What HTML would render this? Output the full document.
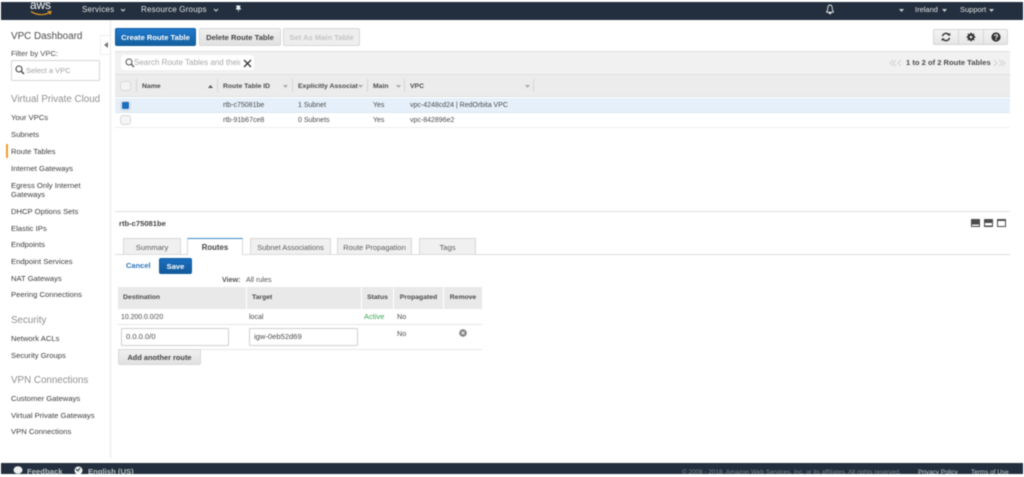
<!DOCTYPE html>
<html>
<head>
<meta charset="utf-8">
<style>
html,body{margin:0;padding:0;background:#fff;width:1024px;height:477px;overflow:hidden}
#p{position:relative;width:1024px;height:477px;overflow:hidden;font-family:"Liberation Sans",sans-serif;font-size:7.5px;color:#444;filter:blur(.45px)}
#p div,#p svg{position:absolute}
.t{white-space:nowrap;line-height:10px}
.nav{left:11px;font-size:7.65px;color:#3c3c3c;white-space:nowrap;line-height:10px}
.sec{left:11px;font-size:9.8px;color:#8f8f8f;white-space:nowrap;line-height:12px}
.b{font-weight:bold}
.hd{top:2px;left:1px;width:1022px;height:18px;background:#232f3e}
.w{color:#dfe4e4;font-size:7.5px;white-space:nowrap;line-height:10px}
.btn{height:18px;line-height:18px;text-align:center;font-size:7.6px;font-weight:bold;border-radius:2px;box-sizing:border-box;white-space:nowrap}
.g{background:linear-gradient(#f0f0f0,#e1e1e1);border:1px solid #d8d8d8;color:#444}
.ch{font-weight:bold;color:#4a4a4a;font-size:6.8px;white-space:nowrap;line-height:10px}
.v{width:1px;background:#d5d5d5}
.tab{top:238px;height:16px;box-sizing:border-box;background:#f0f0f0;border:1px solid #d8d8d8;border-bottom:0;text-align:center;font-size:7.6px;line-height:17px;color:#5c5c5c;white-space:nowrap}
.rh{top:287px;height:22px;background:#e9e9e9;box-sizing:border-box;font-weight:bold;font-size:6.8px;line-height:21px;color:#4a4a4a;white-space:nowrap}
.inp{height:18px;top:328px;background:#fff;border:1px solid #cfcfcf;box-sizing:border-box;font-size:7.6px;line-height:16px;color:#4c4c4c;padding-left:4px;border-radius:1px}
.cb{width:11px;height:10px;left:120px;box-sizing:border-box;border:1px solid #d8d8d8;border-radius:3px;background:#f5f5f5}
.c{font-size:7px;color:#4a4a4a}
</style>
</head>
<body>
<div id="p">
  <!-- header -->
  <div class="hd"></div>
  <div class="t" style="left:30px;top:-1px;color:#fff;font-size:12px;line-height:12px;letter-spacing:-.2px">aws</div>
  <svg style="left:29px;top:9px" width="25" height="8" viewBox="0 0 25 8"><path d="M2 2.500C8 6.500 15 6.500 21 3.500M18.500 2.500L22 2.500L21 5.500" fill="none" stroke="#f29c25" stroke-width="1.1"/></svg>
  <div class="w" style="left:82px;top:5px;font-size:8px;letter-spacing:.2px">Services</div>
  <svg style="left:120px;top:8px" width="6" height="4"><path d="M1 1L3 3L5 1" fill="none" stroke="#d5dbdb" stroke-width="1"/></svg>
  <div class="w" style="left:141px;top:5px;font-size:8px;letter-spacing:.2px">Resource Groups</div>
  <svg style="left:213px;top:8px" width="6" height="4"><path d="M1 1L3 3L5 1" fill="none" stroke="#d5dbdb" stroke-width="1"/></svg>
  <svg style="left:235px;top:5px" width="7" height="8" viewBox="0 0 7 8"><path d="M1 .5H5.500L5 2.800L6.500 4.500H4L3.500 7.800L3 4.500H.5L1.800 2.800Z" fill="#eef1f1"/></svg>
  <svg style="left:825px;top:4px" width="10" height="11" viewBox="0 0 10 11"><path d="M5 1C3 1 2.700 3 2.700 5C2.700 7 1.500 7.500 1.500 8.200H8.500C8.500 7.500 7.300 7 7.300 5C7.300 3 7 1 5 1ZM4 9H6L5 10Z" fill="none" stroke="#e6eaea" stroke-width=".9"/></svg>
  <svg style="left:899px;top:9px" width="5" height="3"><path d="M0 0H5L2.500 3Z" fill="#c9cfcf"/></svg>
  <div class="w" style="left:915px;top:5px">Ireland</div>
  <svg style="left:942px;top:9px" width="5" height="3"><path d="M0 0H5L2.500 3Z" fill="#c9cfcf"/></svg>
  <div class="w" style="left:960px;top:5px">Support</div>
  <svg style="left:989px;top:9px" width="5" height="3"><path d="M0 0H5L2.500 3Z" fill="#c9cfcf"/></svg>

  <!-- sidebar -->
  <div class="t" style="left:11px;top:31px;font-size:9.9px;line-height:12px;color:#4c4c4c">VPC Dashboard</div>
  <div class="nav" style="top:49px;color:#4c4c4c">Filter by VPC:</div>
  <div style="left:11px;top:60px;width:89px;height:21px;box-sizing:border-box;border:1px solid #d5d5d5;border-radius:2px"></div>
  <svg style="left:15px;top:65px" width="10" height="10" viewBox="0 0 10 10"><circle cx="4" cy="4" r="3" fill="none" stroke="#444" stroke-width="1.1"/><path d="M6 6L9 9" stroke="#444" stroke-width="1.4"/></svg>
  <div class="t" style="left:26px;top:66px;font-size:7.5px;color:#a0a0a0">Select a VPC</div>
  <div class="sec" style="top:94px">Virtual Private Cloud</div>
  <div class="nav" style="top:113px">Your VPCs</div>
  <div class="nav" style="top:130px">Subnets</div>
  <div style="left:6px;top:144px;width:2px;height:14px;background:#f29c25"></div>
  <div class="nav" style="top:147px">Route Tables</div>
  <div class="nav" style="top:164px">Internet Gateways</div>
  <div class="nav" style="top:181px">Egress Only Internet</div>
  <div class="nav" style="top:190px">Gateways</div>
  <div class="nav" style="top:207px">DHCP Options Sets</div>
  <div class="nav" style="top:224px">Elastic IPs</div>
  <div class="nav" style="top:240px">Endpoints</div>
  <div class="nav" style="top:257px">Endpoint Services</div>
  <div class="nav" style="top:274px">NAT Gateways</div>
  <div class="nav" style="top:290px">Peering Connections</div>
  <div class="sec" style="top:315px">Security</div>
  <div class="nav" style="top:334px">Network ACLs</div>
  <div class="nav" style="top:351px">Security Groups</div>
  <div class="sec" style="top:375px">VPN Connections</div>
  <div class="nav" style="top:394px">Customer Gateways</div>
  <div class="nav" style="top:411px">Virtual Private Gateways</div>
  <div class="nav" style="top:427px">VPN Connections</div>
  <div style="left:110px;top:20px;width:1px;height:438px;background:#e8e8e8"></div>
  <div style="left:100px;top:35px;width:10px;height:20px;background:#fff;border:1px solid #eee;border-right:0;box-sizing:border-box"></div>
  <svg style="left:104px;top:42px" width="4" height="6"><path d="M4 0V6L0 3Z" fill="#777"/></svg>

  <!-- buttons -->
  <div class="btn" style="left:115px;top:28px;width:81px;background:linear-gradient(#1f79cc,#15609f);color:#fff;border:1px solid #125d9c">Create Route Table</div>
  <div class="btn g" style="left:199px;top:28px;width:82px">Delete Route Table</div>
  <div class="btn g" style="left:283px;top:28px;width:77px;color:#c4c4c4;background:#eee">Set As Main Table</div>
  <div style="left:933px;top:29px;width:75px;height:16px;box-sizing:border-box;border:1px solid #d5d5d5;background:linear-gradient(#f3f3f3,#e6e6e6);border-radius:2px"></div>
  <div class="v" style="left:958px;top:30px;height:14px"></div>
  <div class="v" style="left:983px;top:30px;height:14px"></div>
  <svg style="left:941px;top:32px" width="10" height="10" viewBox="0 0 10 10"><path d="M1.500 4.200A3.600 3.600 0 0 1 8 3M8.500 5.800A3.600 3.600 0 0 1 2 7" fill="none" stroke="#333" stroke-width="1.4"/><path d="M6.500 3.600H9.300V.8ZM3.500 6.400H.7V9.200Z" fill="#333"/></svg>
  <svg style="left:966px;top:32px" width="10" height="10" viewBox="0 0 10 10"><circle cx="5" cy="5" r="2.600" fill="none" stroke="#333" stroke-width="1.8"/><path d="M5 .5V9.500M.5 5H9.500M1.800 1.800L8.200 8.200M8.200 1.800L1.800 8.200" stroke="#333" stroke-width="1.200"/><circle cx="5" cy="5" r="1.300" fill="#eee"/></svg>
  <svg style="left:991px;top:32px" width="10" height="10" viewBox="0 0 10 10"><circle cx="5" cy="5" r="4.600" fill="#333"/><path d="M3.500 4C3.500 2.300 6.500 2.300 6.500 4C6.500 5 5 5 5 6" fill="none" stroke="#eee" stroke-width="1.100"/><rect x="4.400" y="6.700" width="1.200" height="1.200" fill="#eee"/></svg>

  <!-- table -->
  <div style="left:115px;top:51px;width:895px;height:23px;background:#f1f1f1;border-top:1px solid #e0e0e0;box-sizing:border-box"></div>
  <div style="left:121px;top:55px;width:133px;height:15px;background:#fff;border-radius:3px"></div>
  <svg style="left:125px;top:58px" width="10" height="10" viewBox="0 0 10 10"><circle cx="4" cy="4" r="3" fill="none" stroke="#555" stroke-width="1"/><path d="M6 6L9 9" stroke="#555" stroke-width="1.300"/></svg>
  <div class="t" style="left:134px;top:58px;width:106px;overflow:hidden;font-size:8px;color:#a8a8a8">Search Route Tables and their</div>
  <svg style="left:243px;top:59px" width="9" height="9"><path d="M1 1L8 8M8 1L1 8" stroke="#333" stroke-width="1.300"/></svg>
  <div class="t b" style="left:906px;top:58px;font-size:7.6px;color:#4c4c4c">1 to 2 of 2 Route Tables</div>
  <svg style="left:889px;top:59px" width="14" height="8" viewBox="0 0 14 8"><path d="M4 1L1 4L4 7M7 1L4 4L7 7M12 1L9 4L12 7" fill="none" stroke="#d4d4d4" stroke-width="1"/></svg>
  <svg style="left:992px;top:59px" width="14" height="8" viewBox="0 0 14 8"><path d="M2 1L5 4L2 7M7 1L10 4L7 7M10 1L13 4L10 7" fill="none" stroke="#d4d4d4" stroke-width="1"/></svg>

  <div style="left:115px;top:74px;width:895px;height:23px;background:#ececec;border-top:1px solid #e0e0e0;border-bottom:1px solid #e0e0e0;box-sizing:border-box"></div>
  <div class="cb" style="top:81px;background:#f4f4f4"></div>
  <div class="v" style="left:136px;top:79px;height:13px"></div>
  <div class="ch" style="left:142px;top:82px">Name</div>
  <svg style="left:208px;top:85px" width="5" height="3"><path d="M0 3H5L2.500 0Z" fill="#555"/></svg>
  <div class="v" style="left:217px;top:79px;height:13px"></div>
  <div class="ch" style="left:223px;top:82px">Route Table ID</div>
  <svg style="left:283px;top:85px" width="5" height="3"><path d="M0 0H5L2.500 3Z" fill="#aaa"/></svg>
  <div class="v" style="left:292px;top:79px;height:13px"></div>
  <div class="ch" style="left:298px;top:82px;width:60px;overflow:hidden">Explicitly Associat</div>
  <svg style="left:358px;top:85px" width="5" height="3"><path d="M0 0H5L2.500 3Z" fill="#aaa"/></svg>
  <div class="v" style="left:367px;top:79px;height:13px"></div>
  <div class="ch" style="left:373px;top:82px">Main</div>
  <svg style="left:396px;top:85px" width="5" height="3"><path d="M0 0H5L2.500 3Z" fill="#aaa"/></svg>
  <div class="v" style="left:404px;top:79px;height:13px"></div>
  <div class="ch" style="left:410px;top:82px">VPC</div>
  <svg style="left:525px;top:85px" width="5" height="3"><path d="M0 0H5L2.500 3Z" fill="#aaa"/></svg>
  <div class="v" style="left:533px;top:79px;height:13px"></div>

  <div style="left:115px;top:98px;width:895px;height:15px;background:#e6f0fa;border-bottom:1px solid #dbe6f0;box-sizing:border-box"></div>
  <div style="left:115px;top:113px;width:895px;height:15px;background:#fff;border-bottom:1px solid #eee;box-sizing:border-box"></div>
  <div class="cb" style="top:101px;background:#e9eef3"></div>
  <div style="left:122px;top:102px;width:7px;height:7px;background:#1a6fc0;border-radius:1px"></div>
  <div class="cb" style="top:115px"></div>
  <div class="t c" style="left:223px;top:101px">rtb-c75081be</div>
  <div class="t c" style="left:298px;top:101px">1 Subnet</div>
  <div class="t c" style="left:373px;top:101px">Yes</div>
  <div class="t c" style="left:410px;top:101px">vpc-4248cd24 | RedOrbita VPC</div>
  <div class="t c" style="left:223px;top:116px">rtb-91b67ce8</div>
  <div class="t c" style="left:298px;top:116px">0 Subnets</div>
  <div class="t c" style="left:373px;top:116px">Yes</div>
  <div class="t c" style="left:410px;top:116px">vpc-842896e2</div>

  <!-- lower panel -->
  <div style="left:115px;top:211px;width:895px;height:1px;background:#e0e0e0"></div>
  <div class="t b" style="left:119px;top:219px;font-size:7.6px;color:#444">rtb-c75081be</div>
  <svg style="left:971px;top:219px" width="35" height="8" viewBox="0 0 35 8"><rect width="9" height="8" fill="#4c4c4c"/><rect x="1" y="5.500" width="7" height="1.500" fill="#eee"/><rect x="13" width="9" height="8" fill="#4c4c4c"/><rect x="14" y="4" width="7" height="2.500" fill="#fff"/><rect x="26" width="9" height="8" fill="#4c4c4c"/><rect x="27" y="2" width="7" height="5" fill="#fff"/></svg>

  <div style="left:115px;top:254px;width:895px;height:1px;background:#ddd"></div>
  <div class="tab" style="left:123px;width:58px">Summary</div>
  <div class="tab" style="left:187px;width:56px;height:17px;background:#fff;border-top:1px solid #3a85c6;color:#444;font-weight:bold;line-height:17px;font-size:7.800px">Routes</div>
  <div class="tab" style="left:250px;width:81px;font-size:7.4px">Subnet Associations</div>
  <div class="tab" style="left:337px;width:75px;font-size:7.500px">Route Propagation</div>
  <div class="tab" style="left:419px;width:57px">Tags</div>

  <div class="t b" style="left:126px;top:261px;font-size:7.500px;color:#2a75bb">Cancel</div>
  <div class="btn" style="left:159px;top:258px;width:33px;height:16px;line-height:15px;background:linear-gradient(#1a6fc0,#13599a);color:#fff;border:1px solid #125d9c">Save</div>
  <div class="t b" style="left:222px;top:275px;font-size:7.200px;color:#555">View:</div>
  <div class="t" style="left:246px;top:275px;font-size:7.200px;color:#555">All rules</div>

  <div class="rh" style="left:118px;width:128px;padding-left:5px">Destination</div>
  <div class="rh" style="left:247px;width:114px;padding-left:5px">Target</div>
  <div class="rh" style="left:362px;width:31px;text-align:center">Status</div>
  <div class="rh" style="left:394px;width:49px;text-align:center">Propagated</div>
  <div class="rh" style="left:444px;width:38px;text-align:center">Remove</div>

  <div class="t" style="left:121px;top:313px;font-size:6.900px;color:#4a4a4a">10.200.0.0/20</div>
  <div class="t" style="left:249px;top:313px;font-size:7px;color:#4a4a4a">local</div>
  <div class="t" style="left:364px;top:312px;font-size:7.500px;color:#3aa655">Active</div>
  <div class="t" style="left:397px;top:312px;font-size:7.200px;color:#4a4a4a">No</div>
  <div style="left:118px;top:324px;width:364px;height:1px;background:#e8e8e8"></div>
  <div class="inp" style="left:121px;width:108px">0.0.0.0/0</div>
  <div class="inp" style="left:249px;width:109px">igw-0eb52d69</div>
  <div class="t" style="left:397px;top:329px;font-size:7.200px;color:#4a4a4a">No</div>
  <svg style="left:459px;top:329px" width="8" height="8" viewBox="0 0 8 8"><circle cx="4" cy="4" r="3.800" fill="#808080"/><path d="M2.500 2.500L5.500 5.500M5.500 2.500L2.500 5.500" stroke="#eee" stroke-width="1"/></svg>
  <div style="left:118px;top:349px;width:364px;height:1px;background:#e8e8e8"></div>
  <div class="btn g" style="left:118px;top:349px;width:83px;height:16px;line-height:15px;font-size:7.400px">Add another route</div>

  <!-- footer -->
  <div style="left:1px;top:463px;width:1022px;height:11px;background:#232f3e;overflow:hidden">
    <svg style="left:12px;top:3px" width="10" height="8"><ellipse cx="5" cy="4" rx="4.500" ry="3.800" fill="#eef0f0"/></svg>
    <div class="t b" style="left:26px;top:4px;font-size:7.700px;color:#b9c1c1">Feedback</div>
    <svg style="left:73px;top:3px" width="9" height="8"><circle cx="4.500" cy="4.500" r="4" fill="#eef0f0"/><path d="M2 3L4 5L6 2" stroke="#232f3e" fill="none"/></svg>
    <div class="t b" style="left:87px;top:4px;font-size:7.700px;color:#b9c1c1">English (US)</div>
    <div class="t" style="left:681px;top:5px;font-size:6.400px;color:#7d8890">© 2008 - 2018, Amazon Web Services, Inc. or its affiliates. All rights reserved.</div>
    <div class="t" style="left:917px;top:5px;font-size:6.400px;color:#c9d0d0">Privacy Policy</div>
    <div class="t" style="left:970px;top:5px;font-size:6.400px;color:#c9d0d0">Terms of Use</div>
  </div>
</div>
</body>
</html>
